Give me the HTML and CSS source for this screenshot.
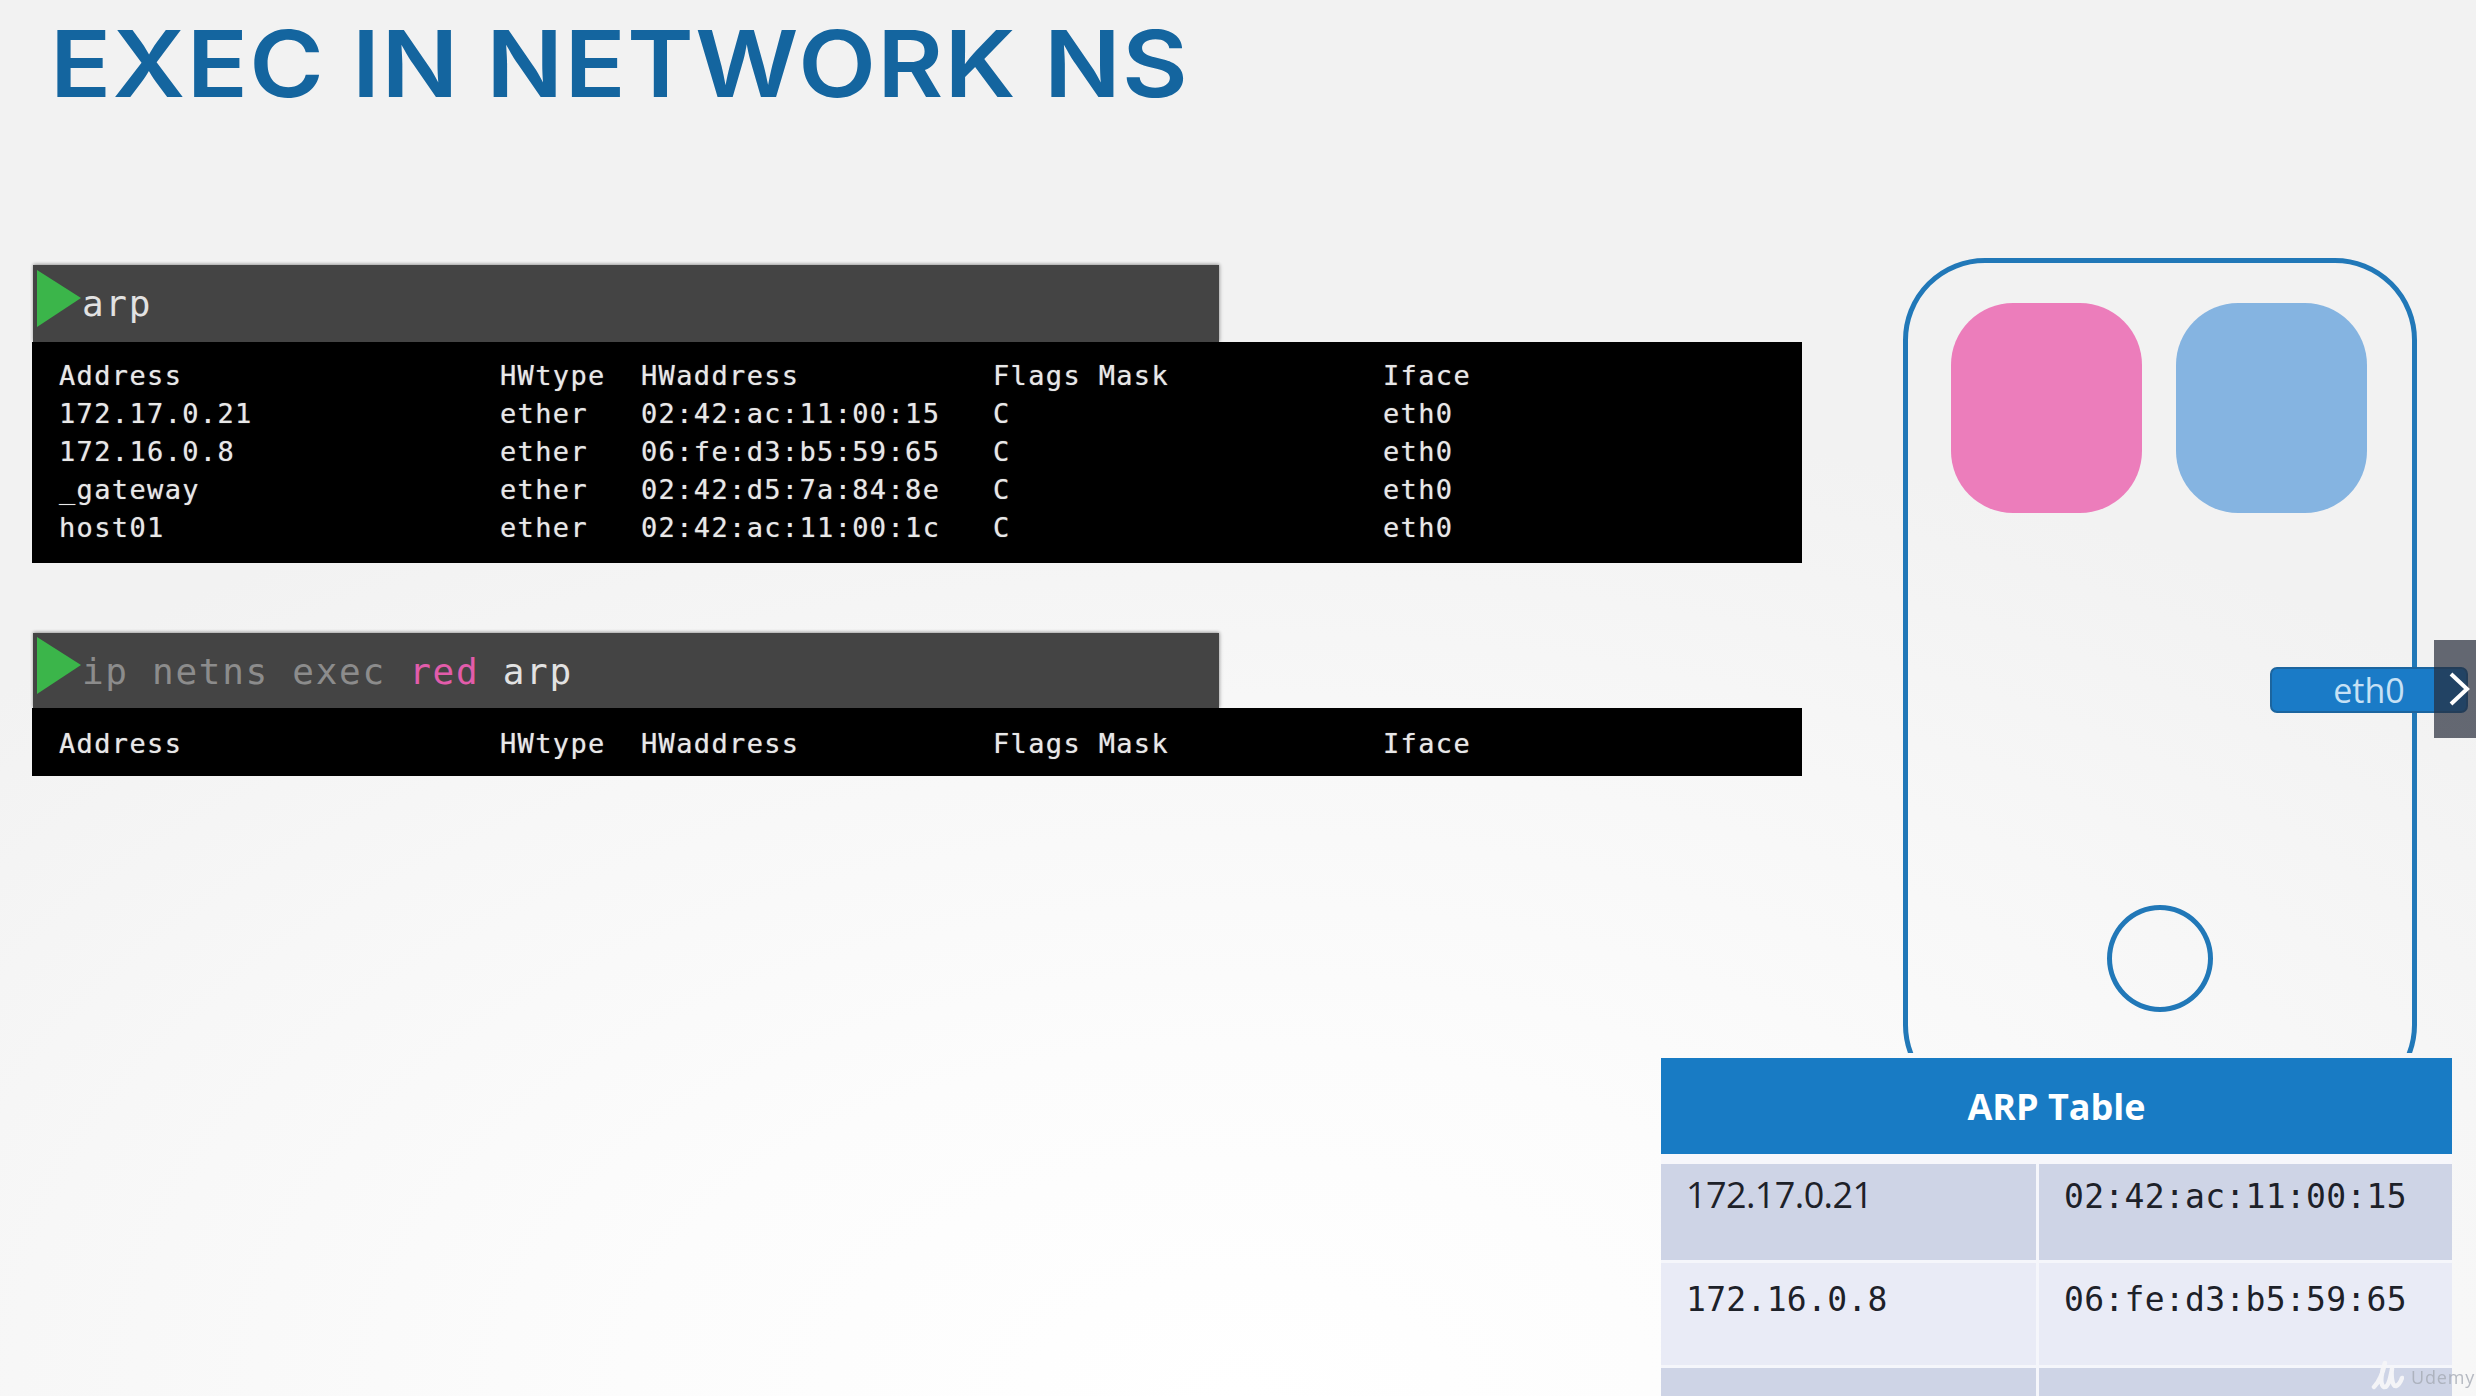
FILE: index.html
```html
<!DOCTYPE html>
<html lang="en">
<head>
<meta charset="utf-8">
<title>Exec in network NS</title>
<link rel="stylesheet" href="styles.css">
</head>
<body>
<main class="slide">
  <div class="top">
    <section class="left">
      <h1 class="title">EXEC IN NETWORK NS</h1>
      <div class="term">
        <div class="cmd">
          <svg class="play" viewBox="0 0 44 57"><polygon points="0,0 44,28 0,57"/></svg>
          <span class="cmd-on">arp</span>
        </div>
        <div class="out out-full">
          <span>Address</span><span>HWtype</span><span>HWaddress</span><span>Flags Mask</span><span>Iface</span>
          <span>172.17.0.21</span><span>ether</span><span>02:42:ac:11:00:15</span><span>C</span><span>eth0</span>
          <span>172.16.0.8</span><span>ether</span><span>06:fe:d3:b5:59:65</span><span>C</span><span>eth0</span>
          <span>_gateway</span><span>ether</span><span>02:42:d5:7a:84:8e</span><span>C</span><span>eth0</span>
          <span>host01</span><span>ether</span><span>02:42:ac:11:00:1c</span><span>C</span><span>eth0</span>
        </div>
      </div>
      <div class="term term-second">
        <div class="cmd">
          <svg class="play" viewBox="0 0 44 57"><polygon points="0,0 44,28 0,57"/></svg>
          <span class="cmd-text"><span class="cmd-dim">ip netns exec</span> <span class="cmd-red">red</span> <span class="cmd-on">arp</span></span>
        </div>
        <div class="out out-short">
          <span>Address</span><span>HWtype</span><span>HWaddress</span><span>Flags Mask</span><span>Iface</span>
        </div>
      </div>
    </section>
    <section class="node">
      <div class="node-line"></div>
      <div class="pods">
        <div class="pod pod-pink"></div>
        <div class="pod pod-blue"></div>
      </div>
      <div class="eth">eth0</div>
      <div class="bridge"></div>
    </section>
  </div>
  <table class="arp">
    <colgroup><col class="col-ip"><col class="col-mac"></colgroup>
    <thead>
      <tr><th colspan="2">ARP Table</th></tr>
    </thead>
    <tbody>
      <tr class="row-a row-first"><td class="sans">172.17.0.21</td><td>02:42:ac:11:00:15</td></tr>
      <tr class="row-b"><td>172.16.0.8</td><td>06:fe:d3:b5:59:65</td></tr>
      <tr class="row-a"><td></td><td></td></tr>
    </tbody>
  </table>
  <div class="next">
    <svg class="chev" viewBox="0 0 22 36"><polyline points="3,3 19,18 3,33"/></svg>
  </div>
  <div class="mark">
    <svg class="mark-logo" viewBox="0 0 33 30"><path d="M3 27 C8 22 12 12 14 3 C11 10 8 24 13 27 C18 28 20 14 21 9 C20 15 21 27 25 26 C28 25 30 21 31 18"/></svg>
    <span class="mark-text">Udemy</span>
  </div>
</main>
</body>
</html>
```
FILE: styles.css
```css
* { box-sizing: border-box; }
html, body { margin: 0; padding: 0; }
body { width: 2476px; height: 1396px; overflow: hidden; }

.slide {
  position: relative;
  width: 2476px;
  height: 1396px;
  overflow: hidden;
  background:
    radial-gradient(ellipse 1750px 1000px at 1240px 1396px, #ffffff 0%, #fcfcfc 35%, #f7f7f7 70%, #f2f2f2 100%),
    #f1f1f1;
  font-family: "DejaVu Sans Mono", monospace;
}

.top { display: flex; align-items: flex-start; height: 1053px; }

.left { width: 1770px; margin-left: 32px; flex: none; }

.title {
  margin: 0 0 0 18px;
  height: 265px;
  padding-top: 9px;
  font-family: "Inter", sans-serif;
  font-weight: 600;
  font-size: 92px;
  line-height: 110px;
  letter-spacing: 1.2px;
  color: #14659f;
  white-space: nowrap;
  transform: scaleX(1.1);
  transform-origin: left center;
}

.term-second { margin-top: 70px; }

.cmd {
  display: flex;
  align-items: center;
  width: 1186px;
  margin-left: 1px;
  padding-left: 4px;
  background: #444444;
  font-size: 36px;
  letter-spacing: 1.7px;
  white-space: pre;
  box-shadow: 0 -1px 3px rgba(0, 0, 0, 0.25), 1px 0 4px rgba(0, 0, 0, 0.2);
  position: relative;
}
.term .cmd { height: 77px; }
.term-second .cmd { height: 75px; }

.play { width: 44px; height: 57px; flex: none; margin: -10px 1px 0 0; }
.play polygon { fill: #3bb54a; }
.cmd-text { padding-top: 2px; }

.cmd-on { color: #e2e2e2; }
.cmd-dim { color: #8c8c8c; }
.cmd-red { color: #e25cab; }

.out {
  display: grid;
  grid-template-columns: 441px 141px 352px 390px 1fr;
  align-content: start;
  background: #000;
  color: #e8e8e8;
  font-size: 27px;
  letter-spacing: 1.35px;
  line-height: 38px;
  padding-left: 27px;
  white-space: pre;
  text-shadow: 0 0 1px rgba(232, 232, 232, 0.6);
  position: relative;
}
.out-full { height: 221px; padding-top: 15px; }
.out-short { height: 68px; padding-top: 17px; }

.node {
  position: relative;
  width: 514px;
  height: 795px;
  margin: 258px 0 0 101px;
  flex: none;
}
.node-line {
  position: absolute;
  inset: 0 0 -54px 0;
  border: 5px solid #2178b8;
  border-radius: 82px;
  clip-path: inset(0 0 54px 0);
}
.pods { display: flex; gap: 34px; padding: 45px 0 0 48px; }
.pod { width: 191px; height: 210px; border-radius: 62px; }
.pod-pink { background: #ec7dbb; }
.pod-blue { background: #85b4e1; }

.eth {
  position: absolute;
  left: 367px;
  top: 409px;
  width: 198px;
  height: 46px;
  border: 2px solid #1c659f;
  border-radius: 7px;
  background: #1a7bc7;
  color: #c6e1f5;
  font-family: "Open Sans", sans-serif;
  font-size: 34px;
  line-height: 42px;
  text-align: center;
}
.bridge {
  width: 106px;
  height: 107px;
  margin: 392px 0 0 204px;
  border: 5px solid #2178b8;
  border-radius: 50%;
}

.arp {
  width: 791px;
  margin: 5px 0 0 1661px;
  border-collapse: separate;
  border-spacing: 0;
  table-layout: fixed;
  font-size: 33px;
  color: #1d2129;
}
.col-ip { width: 378px; }
.col-mac { width: 413px; }
.arp th {
  height: 106px;
  padding: 0;
  border-bottom: 10px solid #f7f7fb;
  background: #187bc4;
  background-clip: padding-box;
  color: #fff;
  font-family: "Open Sans", sans-serif;
  font-weight: 700;
  font-size: 36px;
  text-align: center;
}
.arp td {
  padding: 13px 0 0 25px;
  height: 105px;
  vertical-align: top;
  border-bottom: 3px solid #f5f6fb;
  letter-spacing: 0.3px;
  white-space: pre;
}
.arp .row-first td { height: 99px; }
.arp td:first-child { border-right: 3px solid #f5f6fb; }
.arp td.sans {
  font-family: "Open Sans", sans-serif;
  font-size: 36px;
  letter-spacing: -0.6px;
  padding-top: 6px;
}
.row-a td { background: #ced4e6; }
.row-b td { background: #e9ebf6; }
.arp .row-b td { padding-top: 17px; }

.next {
  position: absolute;
  top: 640px;
  right: 0;
  width: 42px;
  height: 98px;
  background: rgba(38, 44, 58, 0.7);
  display: flex;
  align-items: center;
  justify-content: flex-end;
  padding-right: 6px;
}
.chev { width: 22px; height: 36px; }
.chev polyline { fill: none; stroke: #fff; stroke-width: 4; }

.mark {
  position: absolute;
  right: 1px;
  bottom: 6px;
  display: flex;
  align-items: center;
  gap: 7px;
  font-family: "Open Sans", sans-serif;
  font-size: 18px;
  letter-spacing: 0.8px;
  color: rgba(165, 170, 180, 0.8);
  filter: blur(0.7px);
}
.mark-logo { width: 33px; height: 30px; }
.mark-logo path { fill: none; stroke: rgba(245, 245, 248, 0.95); stroke-width: 4.5; stroke-linecap: round; stroke-linejoin: round; }
.mark-text { padding-top: 4px; }
```
